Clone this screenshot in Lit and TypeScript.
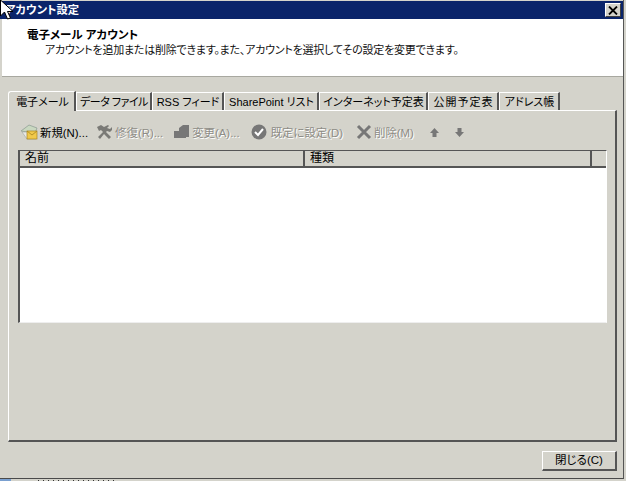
import { LitElement, html, css } from "lit";
import { customElement } from "lit/decorators.js";

const tabs: [string, number, number][] = [["電子メール", 68, 0], ["データ ファイル", 76, -0.5], ["RSS フィード", 72, 0], ["SharePoint リスト", 95, 0], ["インターネット予定表", 109, 0], ["公開予定表", 71, 1], ["アドレス帳", 61, 0]];

@customElement("app-root")
export class AppRoot extends LitElement {
  static styles = css`
    :host { display: block; width: 626px; height: 481px; position: relative; overflow: hidden; background: #d4d3cb; font-family: "Liberation Sans", "Noto Sans CJK JP", sans-serif; font-size: 11px; color: #000; font-feature-settings: "palt"; }
    .window { height: 479px; width: 624px; box-sizing: border-box; border-bottom: 1px solid #4a4a4a; border-right: 1px solid #555; padding: 1px 0 0 0; display: flex; flex-direction: column; }
    .title { height: 18px; flex: none; background: #0a246a; color: #fff; font-size: 11.3px; font-weight: 700; line-height: 18px; padding: 0 2px 0 5px; display: flex; justify-content: space-between; align-items: center; }
    .close { width: 16px; height: 14px; box-sizing: border-box; background: #d4d3cb; border: 1px solid; border-color: #fff #404040 #404040 #fff; display: flex; align-items: center; justify-content: center; }
    .head { height: 58px; flex: none; background: #fff; border-bottom: 1px solid #a8a8a0; margin-left: 2px; box-sizing: border-box; padding: 8px 0 0 25px; }
    .head b { display: block; font-size: 11.5px; line-height: 16px; }
    .head p { margin: 0 0 0 18px; font-size: 11px; line-height: 15px; white-space: nowrap; color: #111; letter-spacing: -.22px; }
    .tabs { display: flex; margin: 14px 0 0 8px; height: 19px; flex: none; align-items: flex-end; position: relative; z-index: 1; }
    .tab { height: 18px; line-height: 18px; box-sizing: border-box; text-align: center; border-right: 2px solid #555; border-top: 1px solid #fff; white-space: nowrap; box-shadow: inset 1px 0 #fff; padding-left: 2px; }
    .tab.on { height: 20px; line-height: 20px; margin-bottom: -1px; background: #d4d3cb; border-top-left-radius: 3px; border-left: 1px solid #fff; box-shadow: none; }
    .panel { margin-left: 8px; height: 332px; width: 609px; flex: none; box-sizing: border-box; border-style: solid; border-color: #fff #555 #555 #fff; border-width: 1px 2px 2px 1px; padding: 0 8px 0 9px; }
    .bar { height: 39px; box-sizing: border-box; display: flex; align-items: center; padding: 3px 0 0 2px; color: #8e8c86; font-size: 11.4px; }
    .item { display: flex; align-items: center; gap: 2px; white-space: nowrap; text-shadow: 1px 1px #fff; flex: none; }
    .item.on { color: #000; text-shadow: none; gap: 1px; }
    .m8 { margin-right: 8px; }
    .m10 { margin-right: 10px; }
    .m11 { margin-right: 11px; }
    .m13 { margin-right: 13px; }
    .m15 { margin-right: 15px; }
    .arrows { gap: 14px; }
    .list { height: 173px; width: 589px; background: #fff; border-style: solid; border-color: #555 #fff #eee #555; border-width: 1px 1px 1px 2px; box-sizing: border-box; }
    .cols { display: flex; height: 15px; background: #d4d3cb; border-bottom: 2px solid #555; box-sizing: content-box; line-height: 14px; font-size: 12px; }
    .cols div { box-sizing: border-box; border-right: 2px solid #555; padding-left: 5px; }
    .foot { flex: 1; display: flex; justify-content: flex-end; align-items: flex-start; padding: 9px 6px 0 0; }
    .btn { width: 75px; height: 20px; box-sizing: border-box; border-style: solid; border-color: #fff #555 #555 #fff; border-width: 1px 2px 2px 1px; text-align: center; line-height: 17px; font-size: 11.5px; }
    .strip { height: 1px; margin-top: 1px; background: repeating-linear-gradient(90deg, #333 0 1px, transparent 1px 5px) 38px 0 / 78px 1px no-repeat; position: relative; }
    .strip i { position: absolute; left: 0; top: -1px; width: 11px; height: 2px; background: #7aa0d0; }
    .cursor { position: absolute; left: 0; top: -1px; }
  `;

  render() {
    return html`
      <div class="window">
        <div class="title"><span>アカウント設定</span>
          <div class="close"><svg width="10" height="9" viewBox="0 0 10 9"><path d="M1 .5 9 8.500M9 .5 1 8.500" stroke="#000" stroke-width="1.8"/></svg></div>
        </div>
        <div class="head"><b>電子メール アカウント</b><p>アカウントを追加または削除できます。また、アカウントを選択してその設定を変更できます。</p></div>
        <div class="tabs">${tabs.map(([t, w, s], i) => html`<div class="tab ${i === 0 ? "on" : ""}" style="width:${w}px;letter-spacing:${s}px">${t}</div>`)}</div>
        <div class="panel">
          <div class="bar">
            <div class="item on m8"><svg width="19" height="18" viewBox="0 0 19 18"><path d="M1 8 9 2l8 3-2 5z" fill="#c9d8c0" stroke="#8a9a90" stroke-width=".7"/><path d="M2 9l5 7h9V9z" fill="#e8e8e8" stroke="#a0a8a0" stroke-width=".6"/><rect x="7" y="8" width="10" height="8" fill="#f0c94a" stroke="#a88420" stroke-width=".7"/><path d="M7 8l5 4 5-4" fill="none" stroke="#a88420" stroke-width=".8"/></svg>新規(N)...</div>
            <div class="item m10"><svg width="17" height="16" viewBox="0 0 17 16"><path d="M1 3l4-2 3 2 4-2 1 1-2 2 3 1 2-2 0 3-2 2-3-1-1 1 5 5-2 2-5-5-4 5-2-2 5-5-2-2-2 1z" fill="#7a7a76"/></svg>修復(R)...</div>
            <div class="item m11"><svg width="17" height="16" viewBox="0 0 17 16"><path d="M1 7h5V4l4-3h6v12h-3v1H1z" fill="#777"/></svg>変更(A)...</div>
            <div class="item m13"><svg width="18" height="16" viewBox="0 0 18 16"><circle cx="8" cy="8" r="7.5" fill="#777"/><path d="M4 8l3 3 5-6" fill="none" stroke="#fff" stroke-width="2"/></svg>既定に設定(D)</div>
            <div class="item m15"><svg width="16" height="16" viewBox="0 0 16 16"><path d="M2 2l12 12M14 2 2 14" stroke="#777" stroke-width="3"/></svg>削除(M)</div>
            <div class="item arrows"><svg width="11" height="11" viewBox="0 0 11 11"><path d="M5.500 1 10 6H7.500v4h-4V6H1z" fill="#777"/></svg><svg width="11" height="11" viewBox="0 0 11 11"><path d="M5.500 10 10 5H7.500V1h-4v4H1z" fill="#777"/></svg></div>
          </div>
          <div class="list">
            <div class="cols"><div style="width:285px">名前</div><div style="width:287px">種類</div></div>
          </div>
        </div>
        <div class="foot"><div class="btn">閉じる(C)</div></div>
      </div>
      <div class="strip"><i></i></div>
      <svg class="cursor" width="14" height="22" viewBox="0 0 14 22"><path d="M.5 1v16l4-4 3 7 3-1-3-6.500h5.500z" fill="#fff" stroke="#000" stroke-width="1"/></svg>
    `;
  }
}
